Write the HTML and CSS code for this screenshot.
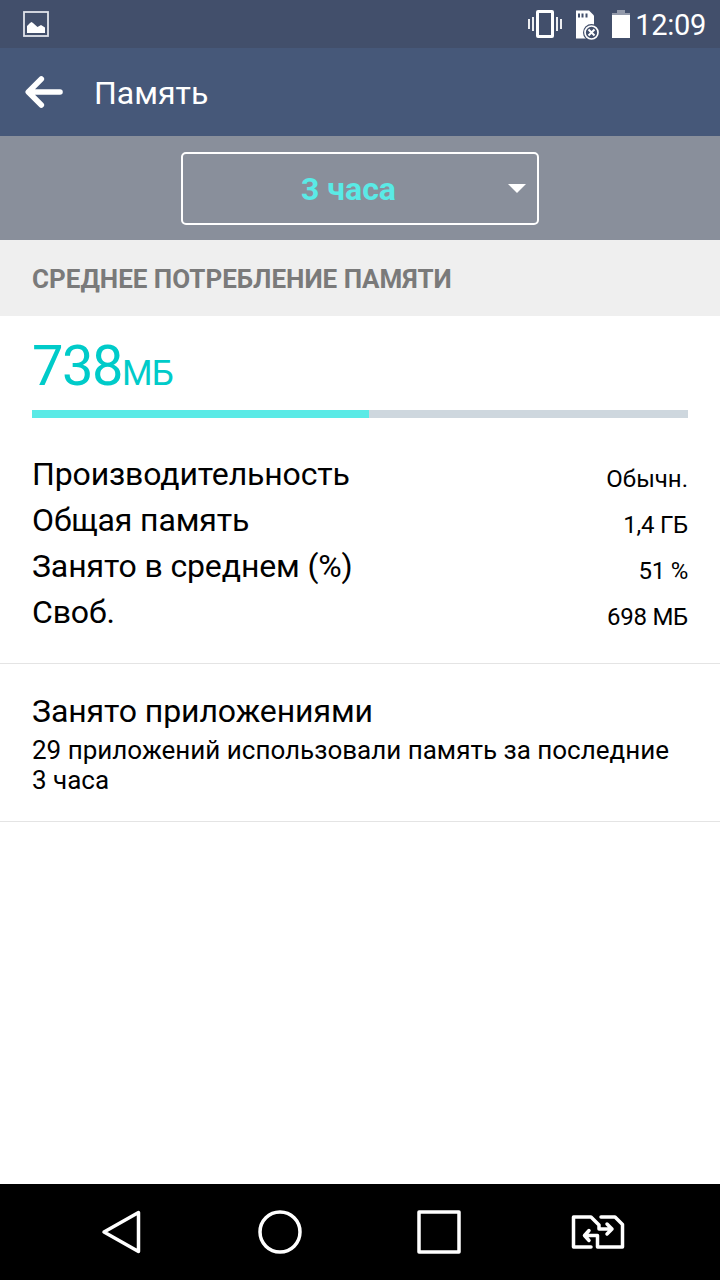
FILE: index.html
```html
<!DOCTYPE html>
<html lang="ru">
<head>
<meta charset="utf-8">
<title>Память</title>
<link rel="stylesheet" href="styles.css">
</head>
<body>
<div class="screen">
  <header class="status">
    <svg class="status-picture" width="26" height="26" viewBox="0 0 26 26"><rect x="1" y="1" width="24" height="24" fill="none" stroke="#e0e3ea" stroke-width="1.800"/><path d="M4 22V15L7 12L8.500 11L10 12L14.500 16L18 14L22 16.500V22Z" fill="#fff"/></svg>
    <div class="status-right">
      <svg width="34" height="30" viewBox="0 0 34 30"><path d="M1 10V20M5 8V22M29 8V22M33 10V20" stroke="#fff" stroke-width="1.800"/><rect x="9.500" y="2.500" width="15" height="25" rx=".5" fill="none" stroke="#fff" stroke-width="3"/></svg>
      <svg class="status-card" width="24" height="31" viewBox="0 0 24 31"><path d="M0 1.500H13L18 6.500V29.500H0Z" fill="#fff"/><path d="M3 4.500V8.500M6.500 4.500V8.500M10.500 4.500V8.500" stroke="#424f6b" stroke-width="2"/><circle cx="15.500" cy="23.500" r="8.500" fill="#424f6b"/><circle cx="15.500" cy="23.500" r="6.500" fill="none" stroke="#fff" stroke-width="1.700"/><path d="M12.500 20.500L18.500 26.500M18.500 20.500L12.500 26.500" stroke="#fff" stroke-width="2"/></svg>
      <svg class="status-battery" width="18" height="30" viewBox="0 0 18 30"><path d="M5 1H13V4H18V6H0V4H5Z" fill="#9299aa"/><path d="M0 6H18V29H0Z" fill="#fff"/></svg>
      <span class="clock">12:09</span>
    </div>
  </header>
  <div class="appbar">
    <svg width="40" height="34" viewBox="0 0 40 34"><path d="M17.300 4L4.300 17L17.300 30M4.500 17H36" fill="none" stroke="#fff" stroke-width="5.600" stroke-linecap="round" stroke-linejoin="round"/></svg>
    <h1 class="title">Память</h1>
  </div>
  <div class="filter">
    <div class="select"><span class="select-value">3 часа</span><svg width="18" height="9" viewBox="0 0 18 9"><path d="M0 0H18L9 9Z" fill="#fff"/></svg></div>
  </div>
  <h2 class="section">СРЕДНЕЕ ПОТРЕБЛЕНИЕ ПАМЯТИ</h2>
  <main class="content">
    <section class="usage">
      <div class="total">738<span class="unit">МБ</span></div>
      <div class="bar"><div class="bar-fill"></div></div>
      <div class="rows">
        <div class="row"><span>Производительность</span><span class="value">Обычн.</span></div>
        <div class="row"><span>Общая память</span><span class="value tight">1,4 ГБ</span></div>
        <div class="row"><span>Занято в среднем (%)</span><span class="value tight">51 %</span></div>
        <div class="row"><span>Своб.</span><span class="value tight">698 МБ</span></div>
      </div>
    </section>
    <section class="apps">
      <div class="apps-title">Занято приложениями</div>
      <div class="apps-text">29 приложений использовали память за последние<br>3 часа</div>
    </section>
  </main>
  <nav class="nav">
    <svg width="160" height="96" viewBox="0 0 160 96"><path d="M138.500 28.500V67.500L104 48Z" fill="none" stroke="#fff" stroke-width="3.500" stroke-linejoin="round"/></svg>
    <svg width="160" height="96" viewBox="0 0 160 96"><circle cx="120" cy="48" r="20" fill="none" stroke="#fff" stroke-width="3.500"/></svg>
    <svg width="160" height="96" viewBox="0 0 160 96"><rect x="99" y="28" width="40" height="40" fill="none" stroke="#fff" stroke-width="3.500" stroke-linejoin="round"/></svg>
    <svg width="160" height="96" viewBox="0 0 160 96"><g fill="none" stroke="#fff" stroke-width="3.500" stroke-linecap="round" stroke-linejoin="round"><path d="M111 63H93.500V33H111L119 41V45H132M127 40L132 45L127 50"/><path d="M121 33H135L142.500 40.500V63H117.500V51.500H105M109 46.500L104.500 51.500L109 56.500"/></g></svg>
  </nav>
</div>
</body>
</html>
```
FILE: styles.css
```css
* { box-sizing: border-box; }
body { margin: 0; font-family: Roboto, "Noto Sans", sans-serif; color: #000; background: #fff; }
svg { display: block; flex: none; }
.screen { width: 720px; height: 1280px; display: flex; flex-direction: column; overflow: hidden; }
.status { height: 48px; flex: none; display: flex; justify-content: space-between; align-items: center; padding: 0 14px 0 23px; background: #424f6b; }
.status-right { display: flex; align-items: center; }
.status-card { margin-left: 14px; }
.status-battery { margin-left: 12px; }
.clock { margin-left: 5px; font-size: 29px; line-height: 48px; letter-spacing: -0.3px; color: #fff; padding-top: 2px; }
.appbar { height: 88px; flex: none; display: flex; align-items: center; padding-left: 24px; background: #465879; color: #fff; }
.title { margin: 1px 0 0 30px; font-size: 32px; line-height: 88px; font-weight: 400; }
.filter { height: 104px; flex: none; display: flex; justify-content: center; padding-top: 16px; background: #898f9b; }
.select { width: 358px; height: 73px; display: flex; align-items: center; padding-right: 11px; border: 2px solid #fff; border-radius: 5px; }
.select-value { flex: 1; padding: 2px 0 0 6px; text-align: center; color: #5aeae6; font-size: 32px; font-weight: 700; line-height: 67px; }
.section { height: 76px; flex: none; margin: 0; padding: 1px 32px 0; font-size: 26px; line-height: 76px; font-weight: 700; color: #7a7a7a; background: #efefef; }
.content { flex: 1; background: #fff; }
.usage { height: 348px; padding: 18px 32px 0; border-bottom: 1px solid #e4e4e4; }
.total { height: 76px; font-size: 56px; line-height: 64px; letter-spacing: -1.5px; color: #00cbc9; }
.unit { font-size: 35px; letter-spacing: -0.7px; }
.bar { height: 8px; background: #ced7de; }
.bar-fill { width: 337px; height: 8px; background: #5aeae6; }
.rows { padding-top: 33px; }
.row { height: 46px; display: flex; justify-content: space-between; font-size: 32px; line-height: 46px; letter-spacing: -0.13px; }
.value { padding-top: 5px; font-size: 24px; letter-spacing: 0; }
.tight { letter-spacing: -0.25px; }
.apps { height: 158px; padding: 28px 32px 0; border-bottom: 1px solid #e4e4e4; }
.apps-title { font-size: 32px; line-height: 38px; letter-spacing: -0.08px; }
.apps-text { padding-top: 5px; font-size: 26px; line-height: 30px; white-space: nowrap; }
.nav { height: 96px; flex: none; display: flex; padding-right: 80px; background: #000; }
```
